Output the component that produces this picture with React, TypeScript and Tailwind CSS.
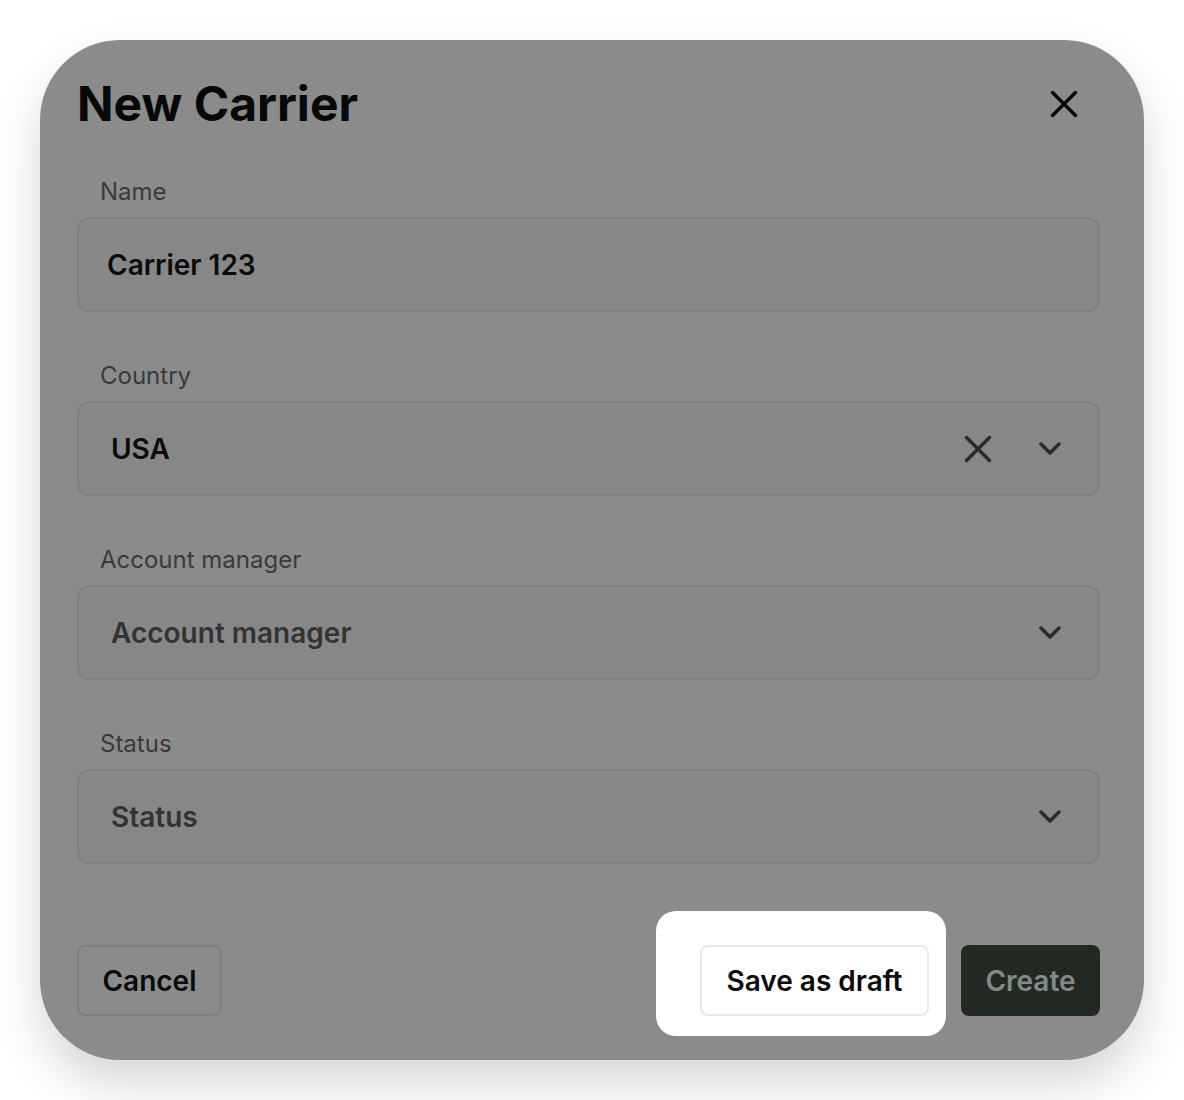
import React from 'react';

const font = { fontFamily: 'Inter, "Noto Sans", sans-serif' };

const CloseIcon: React.FC<{ className?: string; stroke?: string }> = ({ className, stroke = '#0a0a0a' }) => (
  <svg viewBox="0 0 28 28" className={className} fill="none">
    <path d="M2.5 2.5L25.5 25.5M25.5 2.5L2.5 25.5" stroke={stroke} strokeWidth="3.5" strokeLinecap="round" />
  </svg>
);

const Chevron: React.FC = () => (
  <svg viewBox="0 0 22 13" className="w-[22px] h-[13px]" fill="none">
    <path d="M2 2L11 11L20 2" stroke="#2b2b2b" strokeWidth="3.5" strokeLinecap="round" strokeLinejoin="round" />
  </svg>
);

interface SelectFieldProps {
  label: string;
  value: string;
  placeholder?: boolean;
  clearable?: boolean;
}

const FieldLabel: React.FC<{ children: React.ReactNode }> = ({ children }) => (
  <label className="block pl-[23px] text-[24px] leading-[29px] text-[#3a3a3a] mb-[11px]">{children}</label>
);

const SelectField: React.FC<SelectFieldProps> = ({ label, value, placeholder, clearable }) => (
  <div>
    <FieldLabel>{label}</FieldLabel>
    <div className="h-[95px] flex items-center rounded-[12px] border-2 border-[#7f7f7f] bg-[#878787] pl-[32px] pr-[37px]">
      <span
        className={`flex-1 text-[28px] font-semibold ${placeholder ? 'text-[#333333]' : 'text-[#0b0b0b]'}`}
      >
        {value}
      </span>
      {clearable && <CloseIcon className="w-[28px] h-[28px] mr-[47px]" stroke="#2b2b2b" />}
      <Chevron />
    </div>
  </div>
);

export default function App() {
  return (
    <div className="min-h-screen bg-white p-[40px]" style={font}>
      <div className="w-[1104px] h-[1020px] rounded-[80px] bg-[#8b8b8b] shadow-[0_24px_48px_rgba(0,0,0,0.16)] pl-[37px] pr-[44px] pt-[35px] flex flex-col">
        <div className="flex items-center justify-between">
          <h2 className="text-[48px] leading-[58px] font-bold text-[#080808]">New Carrier</h2>
          <button className="mr-[22px]">
            <CloseIcon className="w-[28px] h-[28px]" />
          </button>
        </div>

        <div className="mt-[44px] flex flex-col gap-[49px]">
          <div>
            <FieldLabel>Name</FieldLabel>
            <div className="h-[95px] flex items-center rounded-[12px] border-2 border-[#7f7f7f] bg-[#878787] pl-[28px]">
              <span className="text-[28px] font-semibold text-[#0b0b0b]">Carrier 123</span>
            </div>
          </div>
          <SelectField label="Country" value="USA" clearable />
          <SelectField label="Account manager" value="Account manager" placeholder />
          <SelectField label="Status" value="Status" placeholder />
        </div>

        <div className="mt-[81px] flex items-center">
          <button className="h-[71px] w-[145px] rounded-[8px] border-2 border-[#7f7f7f] text-[28px] font-semibold text-[#0a0a0a]">
            Cancel
          </button>
          <div className="flex-1" />
          <div className="relative">
            <span className="absolute -top-[34px] -left-[44px] -right-[17px] -bottom-[20px] rounded-[20px] bg-white" />
            <button className="relative h-[71px] w-[229px] rounded-[8px] border-2 border-[#e8e8e8] bg-white text-[28px] font-semibold text-[#0a0a0a]">
              Save as draft
            </button>
          </div>
          <button className="ml-[32px] h-[71px] w-[139px] rounded-[8px] bg-[#212922] text-[28px] font-semibold text-[#858a86]">
            Create
          </button>
        </div>
      </div>
    </div>
  );
}
